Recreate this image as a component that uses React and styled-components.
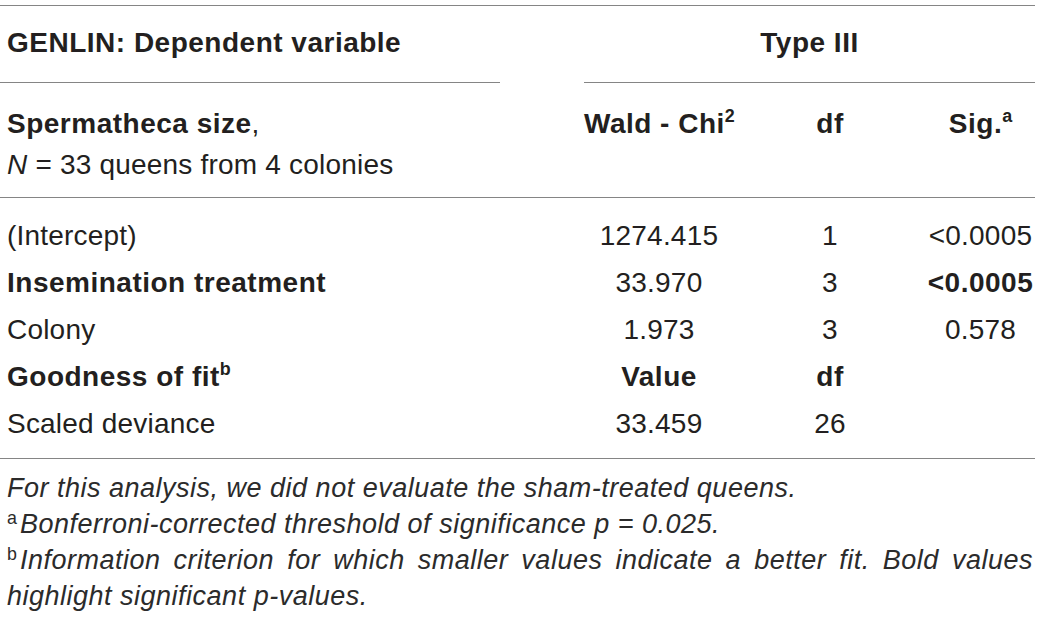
import React from 'react';
import styled, { createGlobalStyle } from 'styled-components';

const GlobalStyle = createGlobalStyle`
  body {
    margin: 0;
    background: #fff;
    font-family: "Liberation Sans", Arial, Helvetica, sans-serif;
    color: #231f20;
  }
`;

const RULE = '1px solid #858585';

const Wrap = styled.div`
  width: 1035px;
  font-size: 28px;
  letter-spacing: 0.2px;
`;

const TopHead = styled.div`
  display: flex;
  margin-top: 5px;
  border-top: ${RULE};
`;

const HeadCell = styled.div`
  width: ${p => p.$width || 'auto'};
  flex: ${p => (p.$grow ? 1 : 'none')};
  margin-left: ${p => p.$offset || 0};
  padding: 16px 0 19px ${p => (p.$center ? 0 : '7px')};
  line-height: 41px;
  font-weight: 700;
  letter-spacing: 0.5px;
  text-align: ${p => (p.$center ? 'center' : 'left')};
  border-bottom: ${RULE};
`;

const Grid = styled.div`
  display: grid;
  grid-template-columns: 584px 150px 192px 109px;
`;

const SubHead = styled(Grid)`
  padding: 20px 0 12px;
  line-height: 41px;
  border-bottom: ${RULE};
`;

const Body = styled.div`
  padding: 14px 0 11px;
  border-bottom: ${RULE};
`;

const Row = styled(Grid)`
  line-height: 47px;
`;

const Cell = styled.div`
  padding-left: ${p => (p.$center ? 0 : '7px')};
  text-align: ${p => (p.$center ? 'center' : 'left')};
  font-weight: ${p => (p.$bold ? 700 : 400)};
  letter-spacing: ${p => (p.$bold ? '0.5px' : '0.2px')};
  white-space: nowrap;

  b {
    letter-spacing: 0.5px;
  }
`;

const Sup = styled.sup`
  font-size: 0.64em;
  line-height: 0;
  vertical-align: baseline;
  position: relative;
  top: -0.62em;
  letter-spacing: 0;
`;

const Italic = styled.i`
  font-style: italic;
`;

const Notes = styled.div`
  padding: 11px 2px 0 7px;
  font-size: 27px;
  line-height: 36px;
  font-style: italic;
  color: #2b2b2b;
  letter-spacing: 0.5px;
  text-align: justify;
`;

const Note = styled.p`
  margin: 0;
`;

const NoteMark = styled.sup`
  font-style: normal;
  font-size: 0.66em;
  line-height: 0;
  vertical-align: baseline;
  position: relative;
  top: -0.5em;
  margin-right: 3px;
  letter-spacing: 0;
`;

const rows = [
  { label: '(Intercept)', wald: '1274.415', df: '1', sig: '<0.0005' },
  { label: 'Insemination treatment', bold: true, wald: '33.970', df: '3', sig: '<0.0005', sigBold: true },
  { label: 'Colony', wald: '1.973', df: '3', sig: '0.578' },
  { label: 'Goodness of fit', mark: 'b', bold: true, wald: 'Value', df: 'df', sig: '', valBold: true },
  { label: 'Scaled deviance', wald: '33.459', df: '26', sig: '' },
];

export default function App() {
  return (
    <>
      <GlobalStyle />
      <Wrap>
        <TopHead>
          <HeadCell $width="493px">GENLIN: Dependent variable</HeadCell>
          <HeadCell $grow $center $offset="84px">Type III</HeadCell>
        </TopHead>

        <SubHead>
          <Cell>
            <b>Spermatheca size</b>,<br />
            <Italic>N</Italic> = 33 queens from 4 colonies
          </Cell>
          <Cell $center $bold>Wald - Chi<Sup>2</Sup></Cell>
          <Cell $center $bold>df</Cell>
          <Cell $center $bold>Sig.<Sup>a</Sup></Cell>
        </SubHead>

        <Body>
          {rows.map((r) => (
            <Row key={r.label}>
              <Cell $bold={r.bold}>
                {r.label}
                {r.mark && <Sup>{r.mark}</Sup>}
              </Cell>
              <Cell $center $bold={r.valBold}>{r.wald}</Cell>
              <Cell $center $bold={r.valBold}>{r.df}</Cell>
              <Cell $center $bold={r.sigBold}>{r.sig}</Cell>
            </Row>
          ))}
        </Body>

        <Notes>
          <Note>For this analysis, we did not evaluate the sham-treated queens.</Note>
          <Note><NoteMark>a</NoteMark>Bonferroni-corrected threshold of significance p = 0.025.</Note>
          <Note>
            <NoteMark>b</NoteMark>Information criterion for which smaller values indicate a better fit. Bold values highlight significant p-values.
          </Note>
        </Notes>
      </Wrap>
    </>
  );
}
